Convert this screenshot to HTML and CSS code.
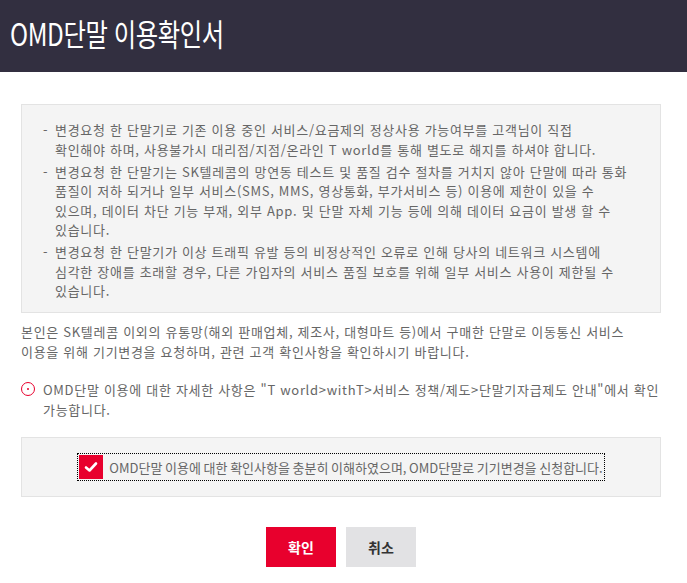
FILE: index.html
```html
<!DOCTYPE html>
<html lang="ko">
<head>
	<meta charset="UTF-8">
	<title>OMD단말 이용확인서</title>
	<link rel="stylesheet" href="styles.css">
</head>
<body>
	<div class="header">
		<h1>OMD단말 이용확인서</h1>
	</div>
	<div class="content">
		<ul class="notice">
			<li>변경요청 한 단말기로 기존 이용 중인 서비스/요금제의 정상사용 가능여부를 고객님이 직접<br>확인해야 하며, 사용불가시 대리점/지점/온라인 T world를 통해 별도로 해지를 하셔야 합니다.</li>
			<li>변경요청 한 단말기는 SK텔레콤의 망연동 테스트 및 품질 검수 절차를 거치지 않아 단말에 따라 통화<br>품질이 저하 되거나 일부 서비스(SMS, MMS, 영상통화, 부가서비스 등) 이용에 제한이 있을 수<br>있으며, 데이터 차단 기능 부재, 외부 App. 및 단말 자체 기능 등에 의해 데이터 요금이 발생 할 수<br>있습니다.</li>
			<li>변경요청 한 단말기가 이상 트래픽 유발 등의 비정상적인 오류로 인해 당사의 네트워크 시스템에<br>심각한 장애를 초래할 경우, 다른 가입자의 서비스 품질 보호를 위해 일부 서비스 사용이 제한될 수<br>있습니다.</li>
		</ul>
		<p class="desc">본인은 SK텔레콤 이외의 유통망(해외 판매업체, 제조사, 대형마트 등)에서 구매한 단말로 이동통신 서비스 이용을 위해 기기변경을 요청하며, 관련 고객 확인사항을 확인하시기 바랍니다.</p>
		<p class="info"><span class="info-icon"></span>OMD단말 이용에 대한 자세한 사항은 "T world&gt;withT&gt;서비스 정책/제도&gt;단말기자급제도 안내"에서 확인 가능합니다.</p>
		<div class="agree">
			<label class="agree-label">
				<span class="check">
					<svg width="14" height="12" viewBox="0 0 14 12"><path d="M2 6.5 L5.5 9.5 L12 2.5" fill="none" stroke="#fff" stroke-width="2.6" stroke-linecap="round" stroke-linejoin="round"/></svg>
				</span>
				<span class="agree-text">OMD단말 이용에 대한 확인사항을 충분히 이해하였으며, OMD단말로 기기변경을 신청합니다.</span>
			</label>
		</div>
		<div class="btns">
			<button class="btn btn-ok">확인</button>
			<button class="btn btn-cancel">취소</button>
		</div>
	</div>
</body>
</html>
```

FILE: styles.css
```css
*{
	margin: 0;
	padding: 0;
	box-sizing: border-box;
}
body{
	font-family: "Noto Sans CJK KR", "Noto Sans", sans-serif;
	font-size: 13px;
	color: #666;
	background: #fff;
}
.header{
	height: 72px;
	background: #322f40;
	padding-left: 10px;
	overflow: hidden;
}
.header h1{
	font-size: 31px;
	font-weight: 400;
	color: #fff;
	line-height: 66px;
	letter-spacing: -0.5px;
	transform: scaleX(0.785);
	transform-origin: left center;
	white-space: nowrap;
}
.content{
	width: 640px;
	margin-left: 21px;
	padding-top: 32px;
}
.notice, .desc, .info{
	letter-spacing: 0.7px;
	word-break: keep-all;
	line-height: 19.5px;
}
.notice{
	list-style: none;
	background: #f4f4f4;
	border: 1px solid #e3e3e3;
	padding: 15px 12px 16px 20px;
	height: 209px;
}
.notice li{
	position: relative;
	padding-left: 13px;
	margin-bottom: 2.5px;
}
.notice li:before{
	content: "-";
	position: absolute;
	left: 1px;
	top: 0;
}
.desc{
	margin-top: 9px;
	padding-right: 20px;
}
.info{
	position: relative;
	margin-top: 19px;
	padding-left: 22px;
}
.info-icon{
	position: absolute;
	left: 0;
	top: 2px;
	width: 14px;
	height: 14px;
	border: 1px solid #e8002d;
	border-radius: 50%;
}
.info-icon:after{
	content: "";
	position: absolute;
	left: 5px;
	top: 5px;
	width: 2px;
	height: 2px;
	background: #e8002d;
	border-radius: 50%;
}
.agree{
	margin-top: 18px;
	height: 60px;
	background: #f4f4f4;
	border: 1px solid #e3e3e3;
	display: flex;
	justify-content: center;
	align-items: center;
}
.agree-label{
	display: flex;
	align-items: center;
	outline: 1px dotted #000;
	padding: 1px;
	cursor: pointer;
}
.check{
	width: 24px;
	height: 24px;
	background: #e8002d;
	display: flex;
	justify-content: center;
	align-items: center;
	margin-right: 6px;
}
.agree-text{
	word-spacing: -1px;
	color: #666;
}
.btns{
	display: flex;
	justify-content: center;
	gap: 10px;
	margin-top: 30px;
}
.btn{
	width: 70px;
	height: 40px;
	border: 0;
	font-family: "Noto Sans CJK KR", sans-serif;
	font-size: 14px;
	font-weight: 700;
	cursor: pointer;
}
.btn-ok{
	background: #e8002d;
	color: #fff;
}
.btn-cancel{
	background: #e2e2e4;
	color: #333;
}
```
